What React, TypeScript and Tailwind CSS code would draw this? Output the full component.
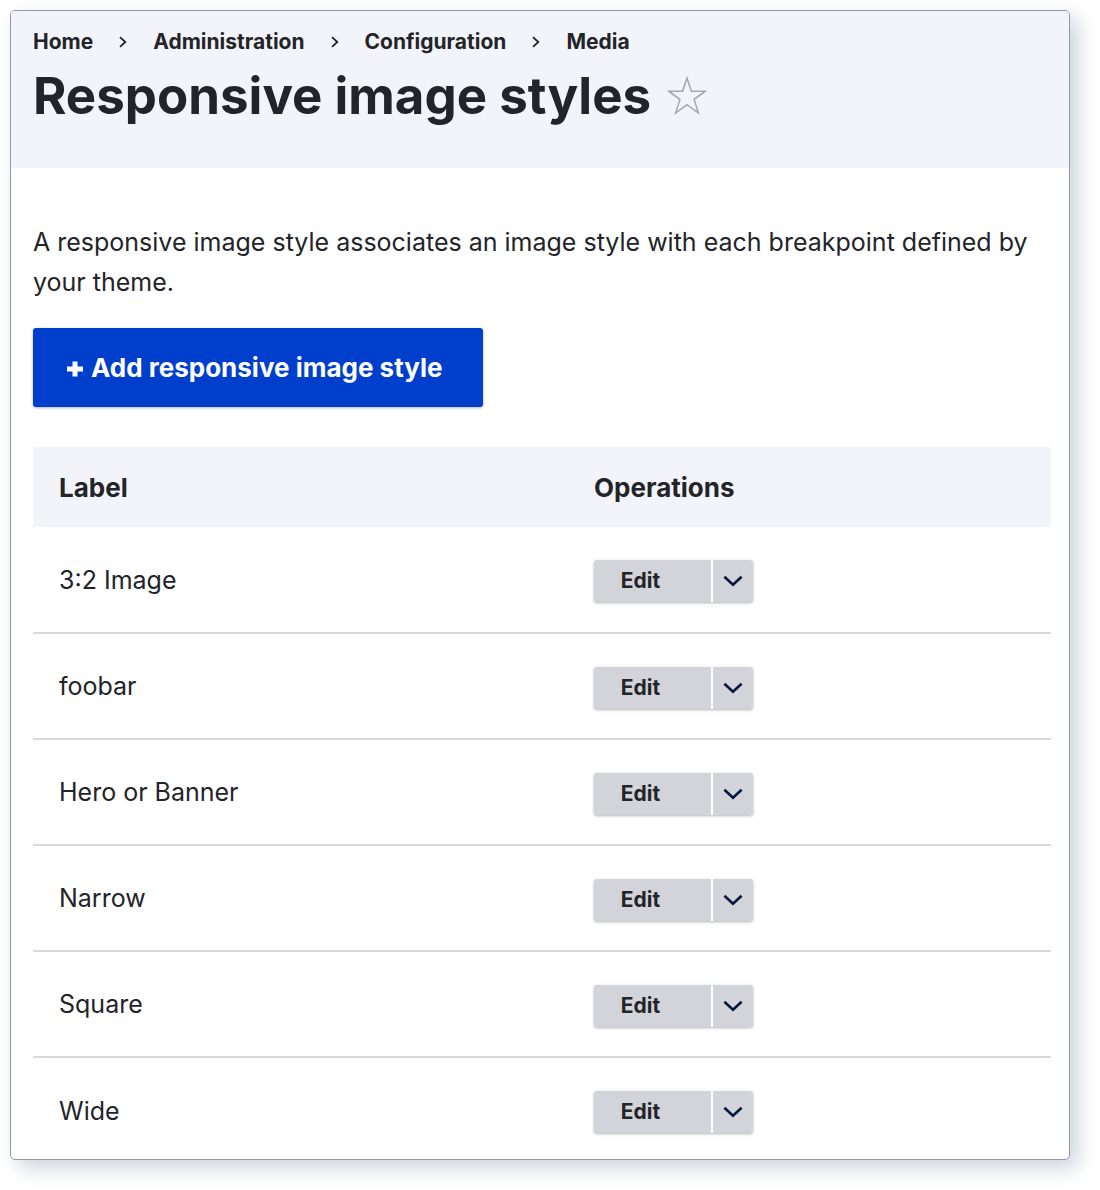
const BREADCRUMBS = ['Home', 'Administration', 'Configuration', 'Media']

const STYLES = ['3:2 Image', 'foobar', 'Hero or Banner', 'Narrow', 'Square', 'Wide']

function Separator() {
  return (
    <svg className="mx-[26px]" width="8" height="12" viewBox="0 0 8 12" fill="none" stroke="currentColor" strokeWidth="1.8" aria-hidden="true">
      <path d="M1 1.2 L6.3 6 L1 10.8" />
    </svg>
  )
}

function StarIcon() {
  return (
    <svg width="40" height="40" viewBox="0 0 40 40" fill="none" stroke="#a3a6ae" strokeWidth="1.5" aria-hidden="true">
      <path d="M20 2 L24.4 15.2 H38.3 L27.1 23.4 L31.4 37 L20 28.6 L8.6 37 L12.9 23.4 L1.7 15.2 H15.6 Z" />
    </svg>
  )
}

function PlusIcon() {
  return (
    <svg className="mt-[3px]" width="16" height="16" viewBox="0 0 16 16" stroke="currentColor" strokeWidth="5" aria-hidden="true">
      <path d="M8 0.5 V15.5 M0 8 H16" />
    </svg>
  )
}

function ChevronIcon() {
  return (
    <svg width="20" height="12" viewBox="0 0 20 12" fill="none" stroke="#04143f" strokeWidth="2.6" aria-hidden="true">
      <path d="M1.4 1.7 L10 9.7 L18.6 1.7" />
    </svg>
  )
}

function Breadcrumb() {
  return (
    <nav aria-label="Breadcrumb">
      <ol className="flex items-center text-[21px] leading-6 font-bold">
        {BREADCRUMBS.map((crumb, index) => (
          <li key={crumb} className="flex items-center">
            {index > 0 && <Separator />}
            <a href="#">{crumb}</a>
          </li>
        ))}
      </ol>
    </nav>
  )
}

function Operations({ name }: { name: string }) {
  return (
    <div className="flex h-[42px] w-[159px] overflow-hidden rounded-[3px] bg-[#d3d4d9] shadow-[0_1px_3px_rgba(0,0,0,0.3)]">
      <button className="flex-1 pr-6 text-[21px] leading-6 font-bold" aria-label={'Edit ' + name}>
        Edit
      </button>
      <button
        className="flex w-[42px] items-center justify-center border-l-2 border-white"
        aria-label={'More operations for ' + name}
      >
        <ChevronIcon />
      </button>
    </div>
  )
}

export default function App() {
  return (
    <div className="pt-[10px] pr-[30px] pb-[30px] pl-[10px] font-[Inter,sans-serif] text-[#232429]">
      <main className="overflow-hidden rounded-[5px] border border-[#9297a3] bg-white shadow-[8px_8px_20px_rgba(50,70,110,0.24)]">
        <header className="bg-[#f3f4f9] px-[22px] pt-[19px] pb-[38px]">
          <Breadcrumb />
          <div className="mt-2 flex items-center gap-4">
            <h1 className="text-[51px] leading-[68px] font-bold">Responsive image styles</h1>
            <button aria-label="Add to shortcuts">
              <StarIcon />
            </button>
          </div>
        </header>

        <div className="pt-[54px] pr-[18px] pl-[22px]">
          <p className="text-[25px] leading-10">
            A responsive image style associates an image style with each breakpoint defined by your theme.
          </p>
          <a
            href="#"
            className="mt-[26px] inline-flex h-[79px] w-[450px] items-center gap-2 rounded-[3px] bg-[#003ecc] pl-[34px] text-[26px] font-bold text-white shadow-[0_1px_3px_rgba(0,0,0,0.3)]"
          >
            <PlusIcon />
            Add responsive image style
          </a>

          {/* the card cuts off the last row slightly */}
          <table className="mt-10 -mb-1 w-full table-fixed text-left">
            <thead>
              <tr className="h-20 bg-[#f3f4f9] text-[26px]">
                <th className="w-[535px] pl-[26px] font-bold">Label</th>
                <th className="pl-[26px] font-bold">Operations</th>
              </tr>
            </thead>
            <tbody className="text-[25px]">
              {STYLES.map(name => (
                <tr key={name} className="h-[106px] border-b-2 border-[#d8d9df] last:border-b-0">
                  <td className="pt-0.5 pl-[26px]">{name}</td>
                  <td className="pt-[3px] pl-[26px]">
                    <Operations name={name} />
                  </td>
                </tr>
              ))}
            </tbody>
          </table>
        </div>
      </main>
    </div>
  )
}
